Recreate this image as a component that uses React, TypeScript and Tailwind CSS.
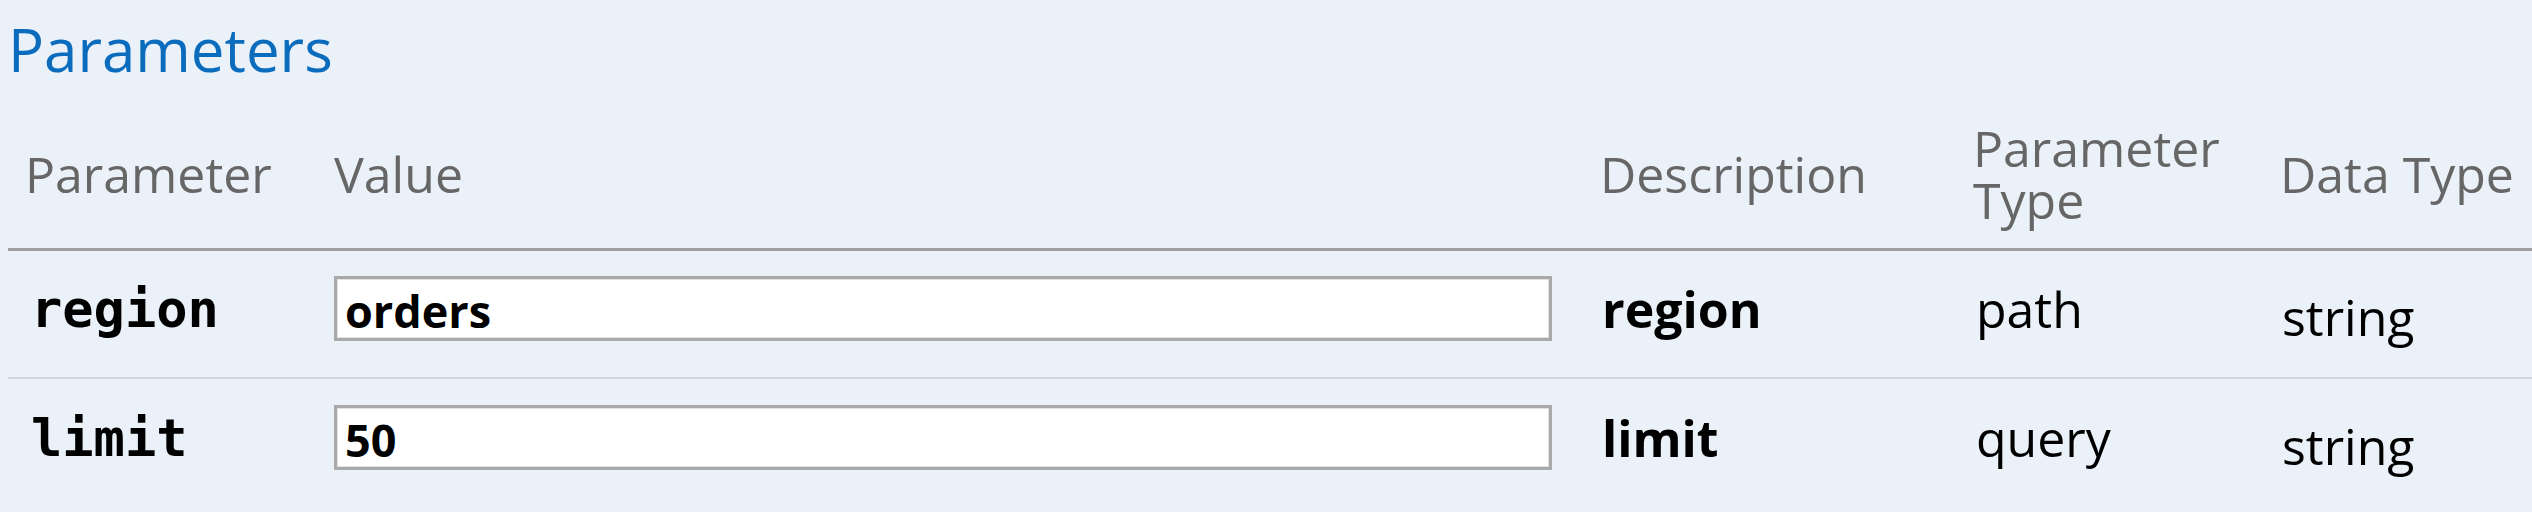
import React from "react";

const rows = [
  { name: "region", value: "orders", desc: "region", ptype: "path", dtype: "string" },
  { name: "limit", value: "50", desc: "limit", ptype: "query", dtype: "string" },
];

export default function App() {
  return (
    <div className="w-[2532px] h-[512px] overflow-hidden bg-[#eaf1f8] pl-[8px] font-['Open_Sans','Noto_Sans',sans-serif]">
      <h3 className="pt-[13px] text-[60px] leading-[72px] text-[#0b6bbd] font-normal">Parameters</h3>
      <div className="mt-[14px]">
        <div className="flex items-center h-[152px] border-b-[3px] border-[#a0a0a0] text-[50px] leading-[52px] text-[#666666]">
          <div className="w-[309px] pl-[17px]">Parameter</div>
          <div className="w-[1263px] pl-[17px]">Value</div>
          <div className="w-[371px] pl-[20px]">Description</div>
          <div className="w-[309px] pl-[22px] pr-[6px]">Parameter Type</div>
          <div className="flex-1 pl-[20px]">Data Type</div>
        </div>
        {rows.map((r, i) => (
          <div
            key={r.name}
            className={
              i === 0
                ? "flex items-center h-[128px] border-b-2 border-[#d2d6da] text-[50px] leading-[52px] text-black"
                : "flex items-center h-[128px] text-[50px] leading-[52px] text-black"
            }
          >
            <div className="w-[309px] pl-[23px] pb-[10px] font-['DejaVu_Sans_Mono',monospace] font-bold text-[52px]">
              {r.name}
            </div>
            <div className="w-[1263px] pl-[17px] pb-[12px]">
              <div className="w-[1218px] h-[65px] bg-white border-[3px] border-[#a9a9a9] shadow-[inset_0_0_0_1px_#e2e2e2] flex items-center pl-[8px] pt-[6px]">
                <span className="text-[45px] font-bold leading-[50px]">{r.value}</span>
              </div>
            </div>
            <div className="w-[371px] pl-[22px] pb-[10px] font-bold">{r.desc}</div>
            <div className="w-[309px] pl-[25px] pb-[10px]">{r.ptype}</div>
            <div className="flex-1 pl-[22px] pt-[6px]">{r.dtype}</div>
          </div>
        ))}
      </div>
    </div>
  );
}
